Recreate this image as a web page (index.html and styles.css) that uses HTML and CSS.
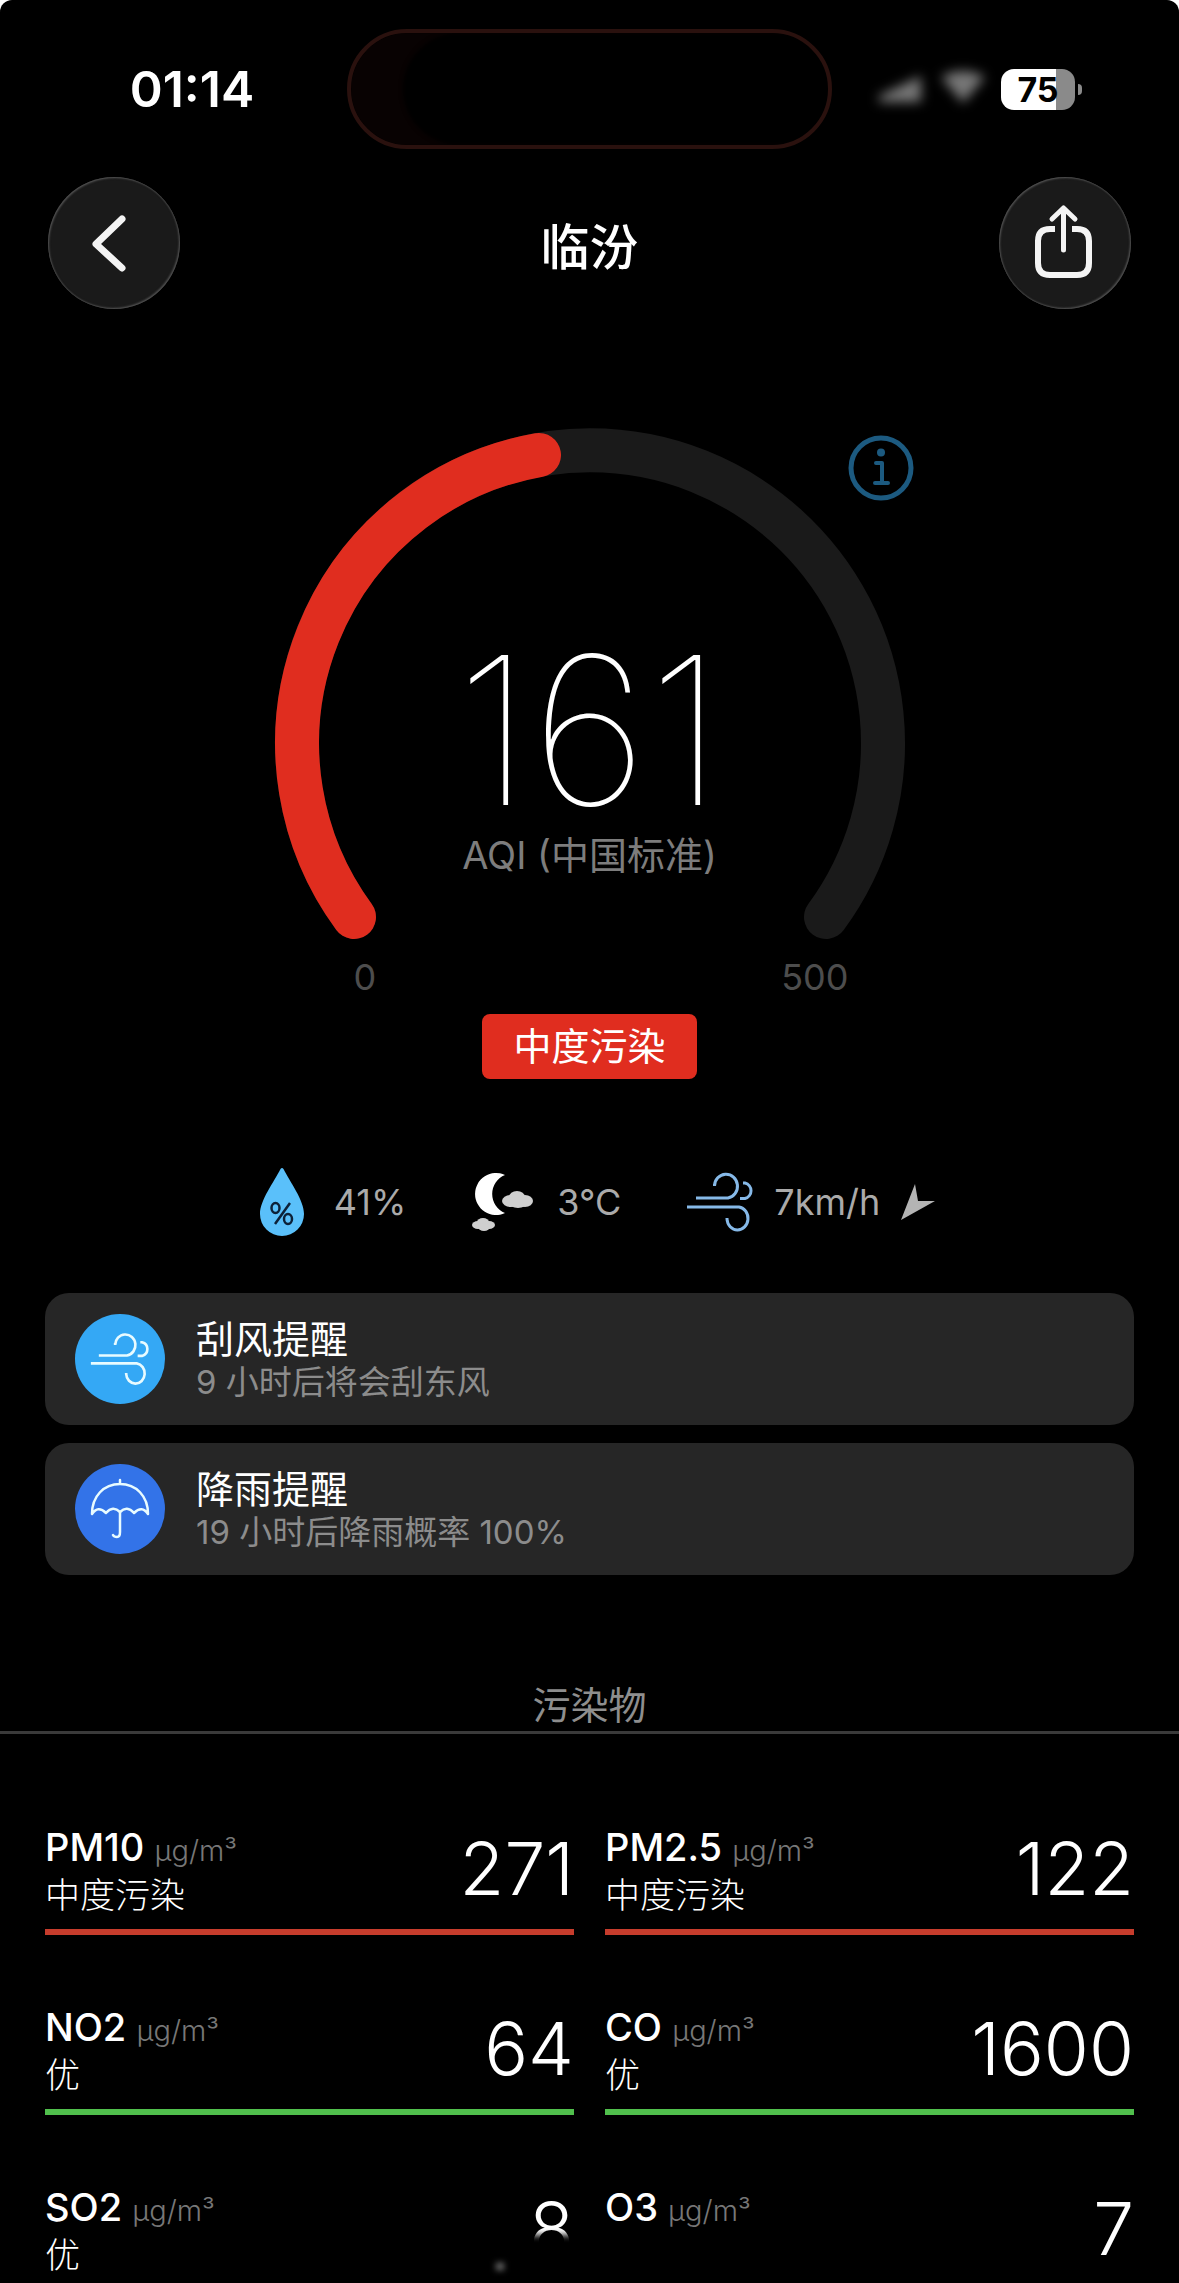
FILE: index.html
```
<!DOCTYPE html>
<html lang="zh-CN">
<head>
    <meta charset="UTF-8">
    <meta name="viewport" content="width=device-width, initial-scale=1.0">
    <title>临汾</title>
    <link rel="stylesheet" href="styles.css">
</head>
<body>
    <svg class="symbols" aria-hidden="true">
        <symbol id="wind" viewBox="0 0 68 60" fill="none" stroke="currentColor">
            <path d="M10 26H42A11.5 12 0 1 0 28.500 14V12"/>
            <path d="M54 26.500H59A8 8 0 0 0 59 11H57"/>
            <path d="M1 35H53A10.500 11.500 0 1 1 41 47V46"/>
        </symbol>
    </svg>

    <div class="screen">
        <div class="status-bar">
            <div class="time">01:14</div>
            <div class="island"></div>
            <div class="status-icons">
                <svg class="signals" width="118" height="56" viewBox="0 0 118 56" aria-hidden="true">
                    <path d="M10 35L52 15V41H10Z"/>
                    <path d="M72 16Q94 4 116 16L94 42Z"/>
                </svg>
                <div class="battery"><span>75</span></div>
            </div>
        </div>

        <header class="nav">
            <button class="nav-button" aria-label="返回">
                <svg width="132" height="132" viewBox="0 0 132 132" fill="none" stroke="#f4f4f4" stroke-width="7" stroke-linecap="round" stroke-linejoin="round">
                    <path d="M74 42L48 67L74 91"/>
                </svg>
            </button>
            <h1>临汾</h1>
            <button class="nav-button" aria-label="分享">
                <svg width="132" height="132" viewBox="0 0 132 132" fill="none" stroke="#f4f4f4" stroke-width="5" stroke-linecap="round" stroke-linejoin="round">
                    <path d="M64.500 73V32M53 42L64.500 31L76 42"/>
                    <path stroke-width="6" stroke-linecap="butt" d="M56 52H51Q39 52 39 64V86Q39 98 51 98H78Q90 98 90 86V64Q90 52 78 52H73"/>
                </svg>
            </button>
        </header>

        <main>
            <section class="aqi">
                <div class="gauge">
                    <svg class="gauge-arc" viewBox="0 0 630 511" fill="none" stroke-width="44" stroke-linecap="round" aria-hidden="true">
                        <path stroke="#1a1a1a" d="M79 488A293 293 0 1 1 551 488"/>
                        <path stroke="#e02d1f" d="M79 488A293 293 0 0 1 264 26"/>
                    </svg>
                    <div class="gauge-center">
                        <div class="aqi-value">161</div>
                        <div class="aqi-label">AQI (中国标准)</div>
                    </div>
                    <button class="info-button" aria-label="说明">
                        <svg width="66" height="66" viewBox="0 0 66 66" fill="none" stroke="#1c5a80" stroke-width="5">
                            <circle cx="33" cy="33" r="30"/>
                            <circle cx="33" cy="17.500" r="4" fill="#1c5a80" stroke="none"/>
                            <path stroke-width="4" stroke-linecap="round" stroke-linejoin="round" d="M28 28H34V48M27 48H40"/>
                        </svg>
                    </button>
                </div>
                <div class="gauge-scale">
                    <span>0</span>
                    <span>500</span>
                </div>
                <div class="level-badge">中度污染</div>
            </section>

            <section class="metrics">
                <div class="metric humidity">
                    <svg width="46" height="68" viewBox="0 0 46 68" aria-hidden="true">
                        <path fill="#5ac0fa" d="M21.500 1Q23 -1 24.500 1C31 14 45 32 45 46A22 22 0 0 1 1 46C1 32 15 14 21.500 1Z"/>
                        <g fill="none" stroke="#0d2138" stroke-width="2.500">
                            <path d="M31 35L16 56"/>
                            <ellipse cx="16.500" cy="40" rx="4" ry="5"/>
                            <ellipse cx="29" cy="51" rx="4" ry="5"/>
                        </g>
                    </svg>
                    <span>41%</span>
                </div>
                <div class="metric">
                    <svg width="64" height="60" viewBox="0 0 64 60" aria-hidden="true">
                        <path fill="#fff" d="M34 3A21 21 0 1 0 34 41A20.500 20.500 0 0 1 34 3Z"/>
                        <g fill="#cfcfcf">
                            <ellipse cx="40" cy="29" rx="9" ry="6"/>
                            <ellipse cx="46" cy="25" rx="8" ry="6"/>
                            <ellipse cx="54" cy="29" rx="8" ry="6"/>
                            <ellipse cx="47" cy="31" rx="9" ry="5"/>
                        </g>
                        <g fill="#cfcfcf">
                            <ellipse cx="7" cy="53" rx="6" ry="4"/>
                            <ellipse cx="12" cy="50" rx="6" ry="4"/>
                            <ellipse cx="18" cy="53" rx="6" ry="4"/>
                            <ellipse cx="13" cy="55" rx="6" ry="4"/>
                        </g>
                    </svg>
                    <span>3°C</span>
                </div>
                <div class="metric wind">
                    <svg class="wind-icon" width="68" height="60"><use href="#wind"/></svg>
                    <span>7km/h</span>
                    <svg class="wind-arrow" width="36" height="38" viewBox="0 0 36 38" aria-hidden="true">
                        <path fill="#b4b4b4" d="M15 1L18 18L35 18L1 37Z"/>
                    </svg>
                </div>
            </section>

            <section class="alerts">
                <div class="alert">
                    <div class="alert-icon gale">
                        <svg width="60" height="54"><use href="#wind"/></svg>
                    </div>
                    <div>
                        <h2>刮风提醒</h2>
                        <p>9 小时后将会刮东风</p>
                    </div>
                </div>
                <div class="alert">
                    <div class="alert-icon rain">
                        <svg width="60" height="66" viewBox="0 0 60 66" fill="none" stroke="#e8fbff" stroke-width="2.500" stroke-linecap="round" stroke-linejoin="round">
                            <path d="M30 4V8M2 38C2 20 14 8 30 8S58 20 58 38Q52 29 44 37Q37 29 30 36Q23 29 16 37Q8 29 2 38Z"/>
                            <path d="M30 36V56Q30 61 27 61T23 59"/>
                        </svg>
                    </div>
                    <div>
                        <h2>降雨提醒</h2>
                        <p>19 小时后降雨概率 100%</p>
                    </div>
                </div>
            </section>

            <h2 class="section-title">污染物</h2>

            <section class="pollutants">
                <div class="pollutant bad">
                    <div>
                        <div class="name">PM10 <small>µg/m³</small></div>
                        <div class="level">中度污染</div>
                    </div>
                    <div class="value">271</div>
                </div>
                <div class="pollutant bad">
                    <div>
                        <div class="name">PM2.5 <small>µg/m³</small></div>
                        <div class="level">中度污染</div>
                    </div>
                    <div class="value">122</div>
                </div>
                <div class="pollutant good">
                    <div>
                        <div class="name">NO2 <small>µg/m³</small></div>
                        <div class="level">优</div>
                    </div>
                    <div class="value">64</div>
                </div>
                <div class="pollutant good">
                    <div>
                        <div class="name">CO <small>µg/m³</small></div>
                        <div class="level">优</div>
                    </div>
                    <div class="value">1600</div>
                </div>
                <div class="pollutant good">
                    <div>
                        <div class="name">SO2 <small>µg/m³</small></div>
                        <div class="level">优</div>
                    </div>
                    <div class="value">8</div>
                </div>
                <div class="pollutant good">
                    <div>
                        <div class="name">O3 <small>µg/m³</small></div>
                    </div>
                    <div class="value">7</div>
                </div>
            </section>
        </main>

        <div class="bottom-fade"></div>
    </div>
</body>
</html>
```

FILE: styles.css
```
* {
    box-sizing: border-box;
}
body {
    margin: 0;
    background-color: #fff;
    font-family: Inter, "Noto Sans CJK SC", sans-serif;
}
h1, h2, p {
    margin: 0;
}
svg {
    display: block;
}
button {
    padding: 0;
    border: none;
    background: none;
    cursor: pointer;
}
.symbols {
    position: absolute;
    width: 0;
    height: 0;
}
.screen {
    position: relative;
    height: 100vh;
    overflow: hidden;
    background-color: #000;
    border-radius: 12px 12px 0 0;
    color: #fff;
}

/* status bar */
.status-bar {
    display: grid;
    grid-template-columns: 1fr 485px 1fr;
    align-items: center;
    padding-top: 29px;
}
.time {
    padding-left: 37px;
    text-align: center;
    font-size: 50px;
    font-weight: 600;
    line-height: 60px;
}
.island {
    height: 120px;
    border: 4px solid #2a110e;
    border-radius: 60px;
    box-shadow: inset 52px 0 4px #080202;
}
.status-icons {
    display: flex;
    align-items: center;
    justify-content: flex-end;
    gap: 14px;
    padding-right: 104px;
}
.signals {
    fill: #777;
    filter: blur(6px);
}
.battery {
    position: relative;
    width: 74px;
    height: 41px;
    border-radius: 13px;
    background: linear-gradient(to right, #fff 74%, #8a8a8a 74%);
    color: #000;
    font-size: 34px;
    font-weight: 700;
    line-height: 41px;
    text-align: center;
}
.battery::after {
    content: "";
    position: absolute;
    top: 15px;
    right: -7px;
    width: 4px;
    height: 11px;
    border-radius: 0 4px 4px 0;
    background-color: #8a8a8a;
}

/* top navigation */
.nav {
    display: flex;
    align-items: center;
    justify-content: space-between;
    margin-top: 28px;
    padding: 0 48px;
}
.nav h1 {
    font-size: 49px;
    font-weight: 500;
}
.nav-button {
    border-radius: 50%;
    background-color: #1a1a1a;
    box-shadow: inset 1px 1px 2px #555, inset -1px -1px 2px #555;
}

/* AQI gauge */
.aqi {
    display: flex;
    flex-direction: column;
    align-items: center;
    margin-top: 120px;
}
.gauge {
    position: relative;
    display: grid;
    width: 630px;
}
.gauge-arc, .gauge-center {
    grid-area: 1 / 1;
}
.gauge-arc {
    width: 100%;
    overflow: visible;
}
.gauge-center {
    padding-top: 201px;
    text-align: center;
}
.aqi-value {
    font-size: 206px;
    font-weight: 140;
    line-height: 200px;
}
.aqi-label {
    color: #7d7d7d;
    font-size: 38px;
    line-height: 50px;
}
.info-button {
    position: absolute;
    top: 6px;
    right: -9px;
}
.gauge-scale {
    display: flex;
    justify-content: space-between;
    width: 630px;
    margin-top: 17px;
    padding: 0 56px 0 79px;
    color: #4d4d4d;
    font-size: 36px;
    line-height: 40px;
}
.level-badge {
    margin-top: 17px;
    padding: 0 31px;
    border-radius: 8px;
    background-color: #e02d1f;
    font-size: 38px;
    line-height: 65px;
}

/* humidity, temperature, wind */
.metrics {
    display: flex;
    justify-content: center;
    gap: 65px;
    margin-top: 89px;
    padding-left: 16px;
    color: #aaa;
    font-size: 36px;
    line-height: 68px;
}
.metric {
    display: flex;
    align-items: center;
    gap: 22px;
}
.humidity {
    gap: 29px;
}
.wind {
    gap: 20px;
}
.wind-icon {
    color: #86b9e8;
    stroke-width: 3px;
}

/* alerts */
.alerts {
    display: grid;
    gap: 18px;
    margin: 57px 45px 0;
}
.alert {
    display: flex;
    align-items: center;
    gap: 31px;
    height: 132px;
    padding: 0 30px;
    border-radius: 24px;
    background-color: #262626;
}
.alert-icon {
    display: flex;
    align-items: center;
    justify-content: center;
    width: 90px;
    height: 90px;
    border-radius: 50%;
    color: #e8fbff;
    stroke-width: 3px;
}
.gale {
    background-color: #34a8f5;
}
.rain {
    background-color: #3373e8;
}
.alert h2 {
    font-size: 38px;
    font-weight: 400;
    line-height: 46px;
}
.alert p {
    color: #8c8c8c;
    font-size: 33px;
    line-height: 40px;
}

/* pollutants */
.section-title {
    margin-top: 105px;
    border-bottom: 3px solid #3a3a3a;
    color: #8e8e8e;
    font-size: 38px;
    font-weight: 400;
    line-height: 51px;
    text-align: center;
}
.pollutants {
    display: grid;
    grid-template-columns: 1fr 1fr;
    gap: 70px 31px;
    margin: 91px 45px 0;
}
.pollutant {
    display: flex;
    justify-content: space-between;
    height: 110px;
    border-bottom: 6px solid;
}
.bad {
    border-color: #c63c2c;
}
.good {
    border-color: #50bf4c;
}
.name {
    font-size: 38px;
    font-weight: 500;
    line-height: 44px;
}
.name small {
    color: #777;
    font-size: 29px;
    font-weight: 300;
}
.level {
    font-size: 35px;
    font-weight: 300;
    line-height: 44px;
}
.value {
    font-size: 73px;
    font-weight: 300;
    line-height: 88px;
}

/* soft cover over the bottom edge */
.bottom-fade {
    position: absolute;
    bottom: -10px;
    left: 480px;
    width: 270px;
    height: 58px;
    background-color: #000;
    filter: blur(3px);
}
.bottom-fade::after {
    content: "";
    position: absolute;
    top: 28px;
    left: 16px;
    width: 8px;
    height: 7px;
    background-color: #777;
}
```
